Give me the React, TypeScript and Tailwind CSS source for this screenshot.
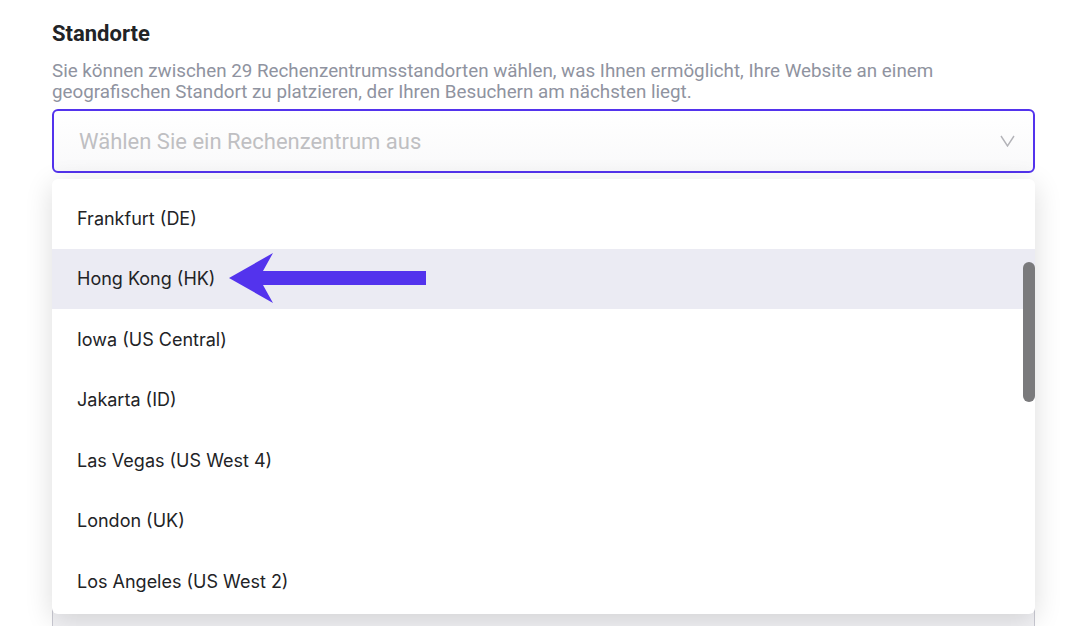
import React from 'react';

const locations = [
    'Frankfurt (DE)',
    'Hong Kong (HK)',
    'Iowa (US Central)',
    'Jakarta (ID)',
    'Las Vegas (US West 4)',
    'London (UK)',
    'Los Angeles (US West 2)',
];

const Arrow = () => (
    <svg width="200" height="52" viewBox="0 0 200 52" className="absolute left-[176px] top-[4px]">
        <path d="M1 25 L45 0 L35 18 L198 18 L198 32 L35 32 L45 50 Z" fill="#5333ed" />
    </svg>
);

export default function App() {
    return (
        <div className="relative w-[1082px] h-[626px] overflow-hidden bg-white" style={{ fontFamily: 'Roboto, "Liberation Sans", sans-serif' }}>
            <div className="pl-[52px] pr-[47px] pt-[19px]">
                <h2 className="text-[22px] leading-[30px] font-bold text-[#222326]">Standorte</h2>
                <p className="mt-[12px] text-[18.8px] leading-[21px] text-[#8f93a0]">
                    Sie können zwischen 29 Rechenzentrumsstandorten wählen, was Ihnen ermöglicht, Ihre Website an einem geografischen Standort zu platzieren, der Ihren Besuchern am nächsten liegt.
                </p>
                <div className="relative mt-[6px]">
                    <div className="h-[64px] rounded-[6px] border-2 border-[#5333ed] bg-gradient-to-b from-white to-[#f9f9fa] flex items-center justify-between pl-[25px] pr-[18px]">
                        <span className="text-[22px] text-[#bfbfc2]">Wählen Sie ein Rechenzentrum aus</span>
                        <svg width="15" height="12" viewBox="0 0 15 12" fill="none" stroke="#b3b3b8" strokeWidth="1.4">
                            <path d="M1 1 L7.5 11 L14 1" />
                        </svg>
                    </div>
                    <div className="h-[400px]" />
                    <div className="h-[60px] rounded-[6px] border border-[#c9c9d2] bg-[#f2f2f5]" />

                    <div className="absolute left-0 right-0 top-[70px] h-[435px] rounded-[6px] bg-white shadow-[0_6px_28px_rgba(0,0,0,0.14)] overflow-hidden">
                        <ul className="pt-[9px]" style={{ fontFamily: 'Inter, Roboto, sans-serif' }}>
                            {locations.map((loc, i) => (
                                <li
                                    key={loc}
                                    className={`relative h-[60.5px] flex items-center pl-[25px] text-[18px] text-[#222326] ${i === 1 ? 'bg-[#ebebf3]' : ''}`}
                                >
                                    {loc}
                                    {i === 1 && <Arrow />}
                                </li>
                            ))}
                        </ul>
                        <div className="absolute right-0 top-[83px] w-[12px] h-[140px] rounded-full bg-[#7a7a7c]" />
                    </div>
                </div>
            </div>
        </div>
    );
}
